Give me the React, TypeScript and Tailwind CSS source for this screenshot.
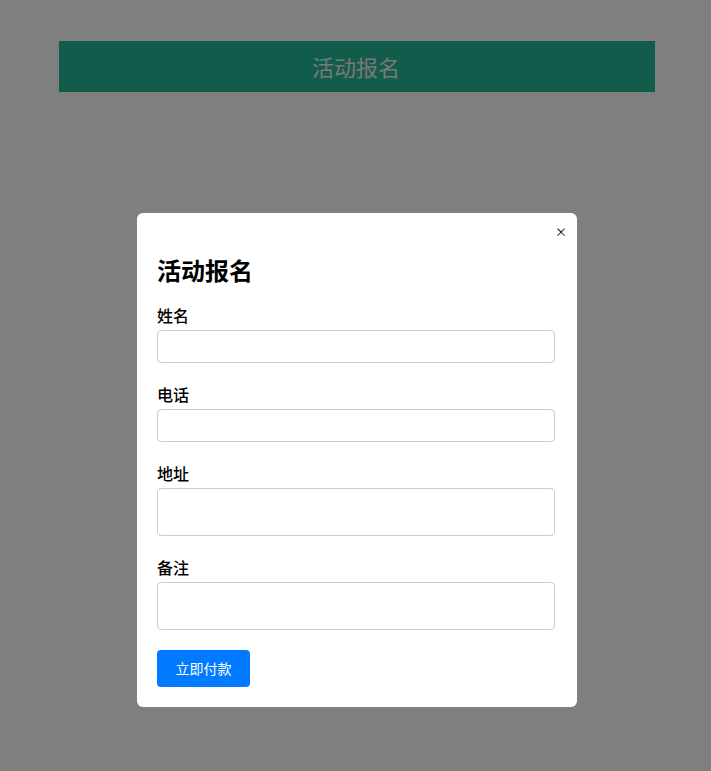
const fields = [
  { label: "姓名", tall: false },
  { label: "电话", tall: false },
  { label: "地址", tall: true },
  { label: "备注", tall: true },
];

export default function App() {
  return (
    <div className="relative h-[771px] overflow-hidden bg-white pt-[41px] font-['Noto_Sans_CJK_SC',sans-serif]">
      <header className="mx-[59px] flex h-[51px] w-[596px] items-center justify-center bg-[#22b894]">
        <span className="pr-[2px] text-[22px] text-[#f2f2f2]">活动报名</span>
      </header>

      <div className="fixed inset-0 flex justify-center bg-black/50 pl-[3px] pt-[213px]">
        <div className="relative h-fit w-[440px] rounded-md bg-white px-5 pb-5 pt-[40px]">
          <button className="absolute right-[10px] top-[13px] text-[12px] leading-none text-black">×</button>
          <h2 className="mb-[16px] text-[24px] font-bold leading-[34px] text-black">活动报名</h2>
          <div className="flex flex-col gap-[19px]">
            {fields.map((f) => (
              <div key={f.label} className="flex flex-col gap-[3px]">
                <label className="text-[16px] font-medium leading-[24px] text-black">{f.label}</label>
                {f.tall ? (
                  <textarea className="h-[48px] w-[398px] resize-none rounded border border-[#ccc] px-2" />
                ) : (
                  <input className="h-[33px] w-[398px] rounded border border-[#ccc] px-2" />
                )}
              </div>
            ))}
            <button className="mt-[1px] h-[37px] w-[93px] rounded bg-[#007bff] text-[14px] text-white">
              立即付款
            </button>
          </div>
        </div>
      </div>
    </div>
  );
}
